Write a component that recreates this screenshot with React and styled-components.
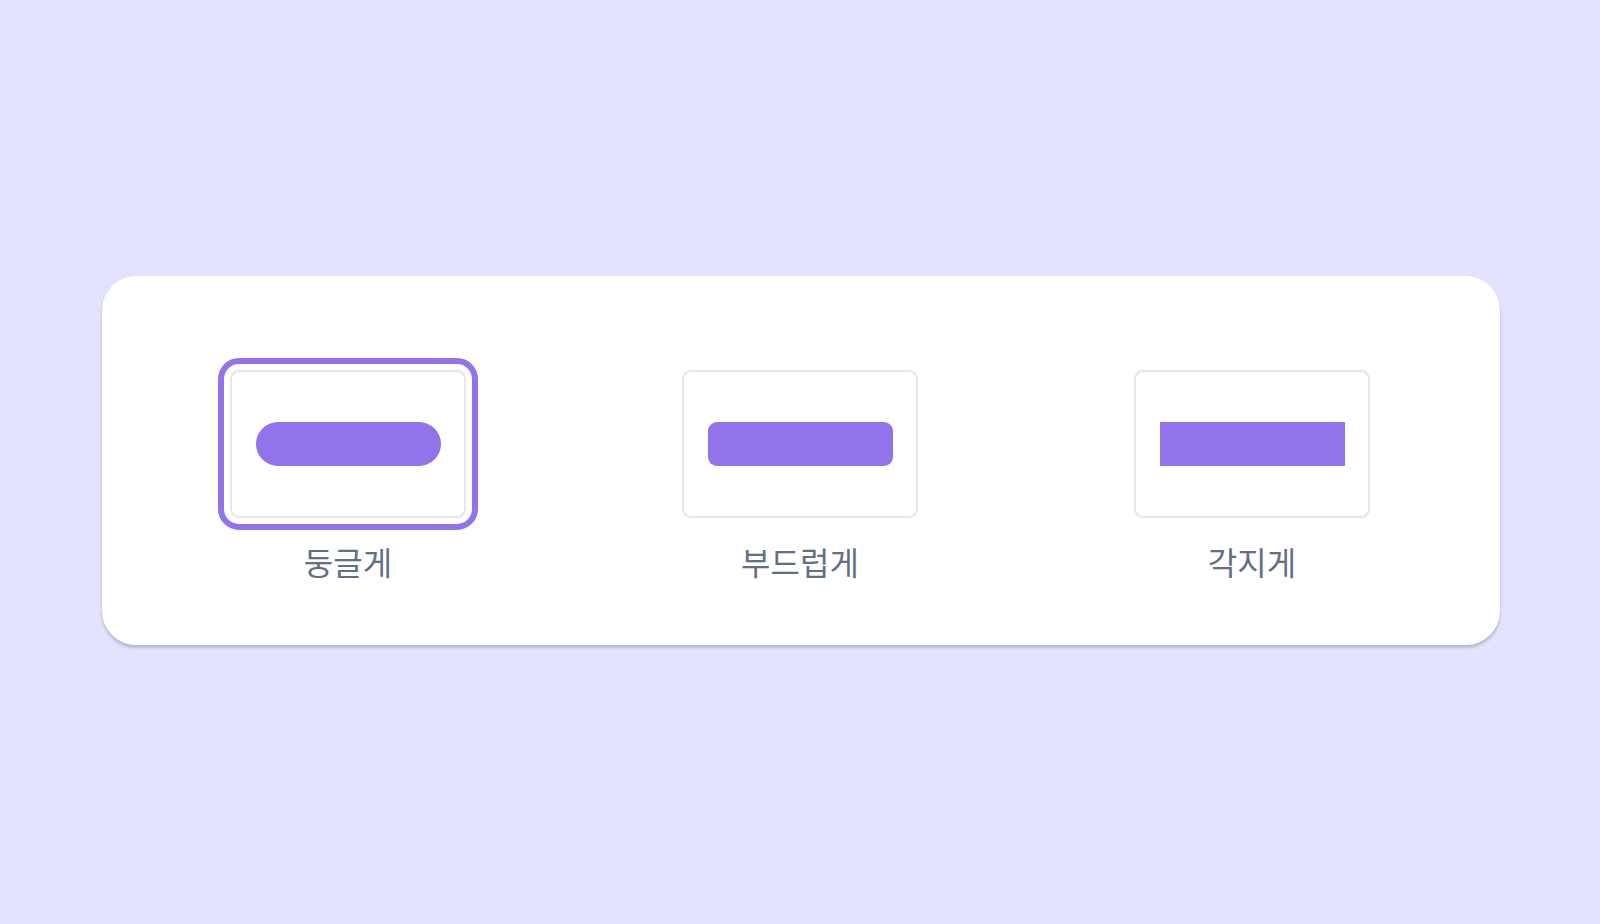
import styled, { createGlobalStyle } from 'styled-components'

const GlobalStyle = createGlobalStyle`
  html, body {
    margin: 0;
    padding: 0;
    background: #e3e3fe;
    font-family: "Noto Sans CJK KR", "Noto Sans", sans-serif;
  }
`

const Page = styled.div`
  width: 100%;
  height: 924px;
  display: flex;
  flex-direction: column;
  align-items: flex-start;
  padding: 276px 100px 0 102px;
  box-sizing: border-box;
`

const Card = styled.div`
  width: 1398px;
  height: 369px;
  box-sizing: border-box;
  background: #fff;
  border-radius: 34px;
  box-shadow: 0 3px 3px rgba(70, 70, 120, 0.28);
  padding: 94px 22px 0 20px;
  display: grid;
  grid-template-columns: repeat(3, 1fr);
  align-items: start;
`

const Option = styled.div`
  display: flex;
  flex-direction: column;
  align-items: center;
  gap: 20px;
`

const Preview = styled.div`
  width: 236px;
  height: 148px;
  box-sizing: border-box;
  border: 2px solid #e6e6e6;
  border-radius: 9px;
  display: flex;
  align-items: center;
  justify-content: center;
  outline: ${p => (p.$active ? '6.5px solid #9173ea' : 'none')};
  outline-offset: 6px;
`

const Bar = styled.div`
  width: 185px;
  height: 44px;
  background: #9173ea;
  border-radius: ${p => p.$radius};
`

const Label = styled.span`
  font-size: 32px;
  line-height: 46px;
  color: #627084;
  font-weight: 400;
`

const options = [
  { label: '둥글게', radius: '22px', active: true },
  { label: '부드럽게', radius: '9px', active: false },
  { label: '각지게', radius: '0', active: false },
]

const App = () => {
  return (
    <>
      <GlobalStyle />
      <Page>
        <Card>
          {options.map(o => (
            <Option key={o.label}>
              <Preview $active={o.active}>
                <Bar $radius={o.radius} />
              </Preview>
              <Label>{o.label}</Label>
            </Option>
          ))}
        </Card>
      </Page>
    </>
  )
}

export default App
